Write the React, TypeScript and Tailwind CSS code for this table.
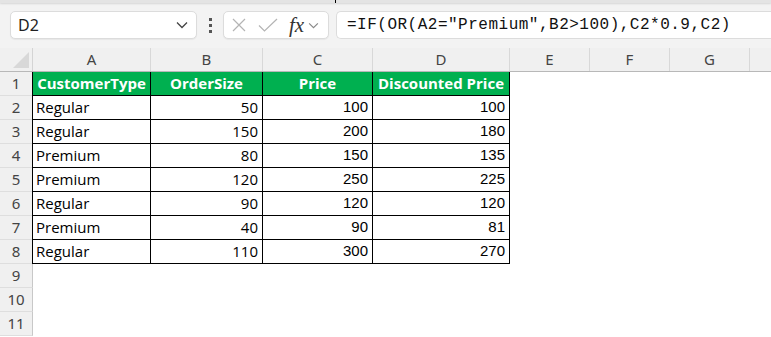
import React from "react";

const COLS = [
  { key: "A", width: 118 },
  { key: "B", width: 112 },
  { key: "C", width: 110 },
  { key: "D", width: 137 },
  { key: "E", width: 80 },
  { key: "F", width: 80 },
  { key: "G", width: 80 },
];

const HEADERS = ["CustomerType", "OrderSize", "Price", "Discounted Price"];

const ROWS: [string, number, number, number][] = [
  ["Regular", 50, 100, 100],
  ["Regular", 150, 200, 180],
  ["Premium", 80, 150, 135],
  ["Premium", 120, 250, 225],
  ["Regular", 90, 120, 120],
  ["Premium", 40, 90, 81],
  ["Regular", 110, 300, 270],
];

const uiFont = { fontFamily: '"Noto Sans", "Open Sans", sans-serif' };

function Chevron({ className }: { className?: string }) {
  return (
    <svg viewBox="0 0 12 8" className={className} fill="none">
      <path d="M1 1.5 6 6.5 11 1.5" stroke="currentColor" strokeWidth="1.3" />
    </svg>
  );
}

function FormulaBar() {
  return (
    <div className="relative h-[48px] bg-[#f3f3f3]">
      <div className="h-[3px] bg-[#e4e4e4] shadow-[0_1px_2px_rgba(0,0,0,0.12)]" />
      <div className="absolute left-[335px] top-0 h-[3px] w-px bg-black" />
      <div className="flex items-center pt-[8px]">
        <div className="ml-[10px] flex h-[28px] w-[187px] items-center rounded-[5px] border border-[#dcdcdc] bg-white pl-[7px] pr-[8px] shadow-[0_1px_1px_rgba(0,0,0,0.05)]">
          <span className="flex-1 text-[16px] text-[#222]" style={uiFont}>
            D2
          </span>
          <Chevron className="h-[8px] w-[12px] text-[#444]" />
        </div>
        <div className="flex w-[26px] flex-col items-center gap-[3px]">
          <span className="h-[3px] w-[3px] bg-[#555]" />
          <span className="h-[3px] w-[3px] bg-[#555]" />
          <span className="h-[3px] w-[3px] bg-[#555]" />
        </div>
        <div className="flex h-[28px] w-[106px] items-center rounded-[5px] border border-[#dcdcdc] bg-white pl-[8px] shadow-[0_1px_1px_rgba(0,0,0,0.05)]">
          <svg viewBox="0 0 14 14" className="h-[14px] w-[14px]" fill="none">
            <path d="M1 1 13 13M13 1 1 13" stroke="#b4b4b4" strokeWidth="1.2" />
          </svg>
          <svg viewBox="0 0 20 14" className="ml-[12px] h-[14px] w-[20px]" fill="none">
            <path d="M1 7.5 6.5 13 19 1" stroke="#b4b4b4" strokeWidth="1.2" />
          </svg>
          <span
            className="ml-[11px] text-[21px] italic leading-none text-[#333]"
            style={{ fontFamily: '"Liberation Serif", serif' }}
          >
            fx
          </span>
          <Chevron className="ml-[4px] h-[7px] w-[11px] text-[#888]" />
        </div>
        <div className="ml-[7px] flex h-[28px] flex-1 items-center rounded-l-[5px] border border-r-0 border-[#dcdcdc] bg-white pl-[10px]">
          <span
            className="whitespace-nowrap text-[16px] tracking-[0.5px] text-[#111]"
            style={{ fontFamily: '"Liberation Mono", monospace' }}
          >
            =IF(OR(A2="Premium",B2&gt;100),C2*0.9,C2)
          </span>
        </div>
      </div>
    </div>
  );
}

function ColumnHeader() {
  return (
    <div className="flex h-[24px] border-b border-[#b8b8b8] bg-[#f0f0f0]" style={uiFont}>
      <div className="relative w-[33px] shrink-0 border-r border-[#d4d4d4]">
        <div className="absolute bottom-[3px] right-[3px] h-0 w-0 border-b-[16px] border-l-[16px] border-b-[#d8d8d8] border-l-transparent" />
      </div>
      {COLS.map((c) => (
        <div
          key={c.key}
          className="flex shrink-0 items-center justify-center border-r border-[#d8d8d8] text-[15px] text-[#444]"
          style={{ width: c.width }}
        >
          {c.key}
        </div>
      ))}
      <div className="flex-1" />
    </div>
  );
}

function RowNum({ n }: { n: number }) {
  return (
    <div
      className="flex w-[33px] shrink-0 items-center justify-center border-r border-b border-r-[#c8c8c8] border-b-[#dedede] bg-[#f0f0f0] text-[15px] text-[#444]"
      style={uiFont}
    >
      {n}
    </div>
  );
}

export default function App() {
  const textFont = { fontFamily: '"Open Sans", "Noto Sans", sans-serif' };
  const numFont = { fontFamily: '"Liberation Sans", Arial, sans-serif' };

  return (
    <div className="h-[337px] w-[771px] overflow-hidden bg-white">
      <FormulaBar />
      <ColumnHeader />

      <div className="flex h-[24px]">
        <RowNum n={1} />
        {HEADERS.map((h, i) => (
          <div
            key={h}
            className={`flex shrink-0 items-center justify-center border-b border-r border-black bg-[#00b050] text-[15px] font-bold text-white ${i === 0 ? "-ml-px border-l" : ""}`}
            style={{ width: COLS[i].width + (i === 0 ? 1 : 0), ...textFont }}
          >
            {h}
          </div>
        ))}
      </div>

      {ROWS.map((r, ri) => (
        <div key={ri} className="flex h-[24px]">
          <RowNum n={ri + 2} />
          <div
            className="-ml-px flex shrink-0 items-center border-b border-l border-r border-black pl-[3px] text-[15px] text-black"
            style={{ width: COLS[0].width + 1, ...textFont }}
          >
            {r[0]}
          </div>
          {[r[1], r[2], r[3]].map((v, ci) => (
            <div
              key={ci}
              className="flex shrink-0 items-center justify-end border-b border-r border-black pr-[4px] text-[15px] text-black"
              style={{ width: COLS[ci + 1].width, ...(ci === 0 ? textFont : numFont) }}
            >
              {v}
            </div>
          ))}
        </div>
      ))}

      {[9, 10, 11].map((n) => (
        <div key={n} className="flex h-[24px]">
          <RowNum n={n} />
        </div>
      ))}
    </div>
  );
}
